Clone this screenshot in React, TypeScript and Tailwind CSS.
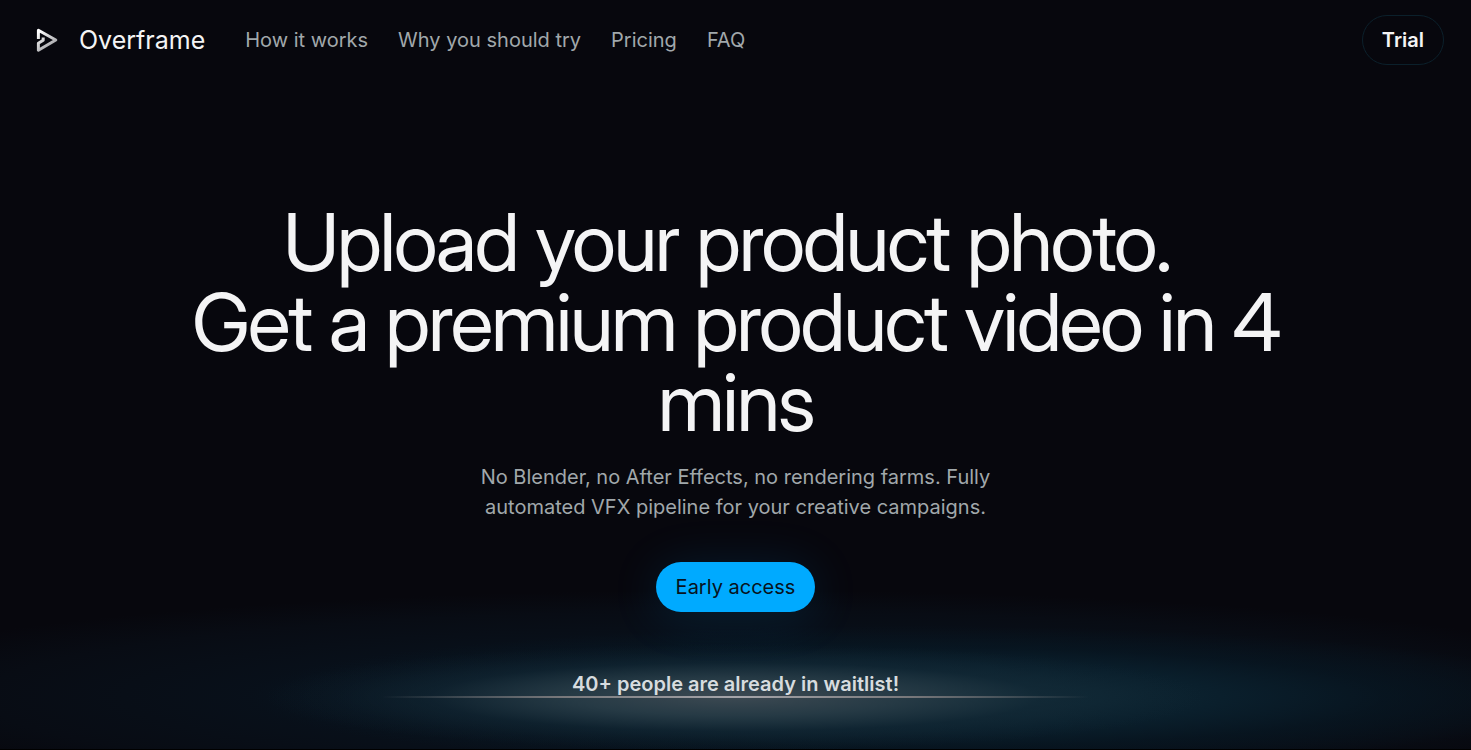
const links = [
  { label: "How it works", href: "#how" },
  { label: "Why you should try", href: "#why" },
  { label: "Pricing", href: "#pricing" },
  { label: "FAQ", href: "#faq" },
];

function Logo() {
  return (
    <svg viewBox="0 0 24 26" className="h-[26px] w-6" fill="none" aria-hidden="true">
      <defs>
        <linearGradient id="mark" x1="2" y1="6" x2="16" y2="24" gradientUnits="userSpaceOnUse">
          <stop stopColor="#ffffff" />
          <stop offset="1" stopColor="#9b9b9f" />
        </linearGradient>
      </defs>
      <path
        d="M3.4 12V3.2L20.8 13L3.4 23.2V16.2L8.2 13.2V10.6"
        stroke="url(#mark)"
        strokeWidth="3"
        strokeLinejoin="round"
      />
    </svg>
  );
}

export default function App() {
  return (
    <div className="relative isolate flex min-h-screen flex-col overflow-hidden bg-[#07070d] font-['Inter',sans-serif] text-xl text-[#f4f4f5]">
      <div className="pointer-events-none absolute inset-x-0 bottom-0 -z-10 h-[160px] overflow-hidden border-b border-black" aria-hidden="true">
        <div className="absolute -inset-x-[14%] top-0 h-[214px] bg-[radial-gradient(closest-side,#071421,#08101a_50%,#080c14_80%,#07070d00)]" />
        <div className="absolute -right-[8%] top-[36px] left-[17%] h-[142px] bg-[radial-gradient(closest-side,#12303d,#0a1f2c_45%,#07192599_70%,#07192500)]" />
        <div className="absolute top-[54px] right-[18%] left-[18%] h-[106px] bg-[radial-gradient(closest-side,#3c4952,#263a45_35%,#13283599_65%,#13283533_85%,#13283500)]" />
        <div className="absolute top-[106px] right-[26%] left-[26%] h-[2px] bg-[linear-gradient(90deg,transparent,#77777a_25%,#a5a5aa_50%,#77777a_75%,transparent)]" />
      </div>

      <header className="flex h-20 items-center justify-between pr-[27px] pl-[35px]">
        <div className="flex items-center gap-10">
          <a href="#top" className="flex items-center gap-5 text-[25px] leading-8">
            <Logo />
            Overframe
          </a>
          <nav className="flex items-center gap-[30px] text-[#a1a8ab]">
            {links.map((link) => (
              <a key={link.href} href={link.href}>{link.label}</a>
            ))}
          </nav>
        </div>
        <button className="h-[50px] rounded-full border border-[#0b202b] px-[19px] font-semibold">Trial</button>
      </header>

      <main className="flex flex-col items-center px-4 pt-[122px] text-center">
        <h1 className="max-w-[1100px] font-['Inter_Display',Inter,sans-serif] text-[80px] leading-[80px] tracking-[-0.03em]">
          Upload your product photo.&nbsp;
          <br />
          Get a premium product video in 4 mins
        </h1>
        <p className="mt-5 max-w-[540px] leading-[30px] text-[#a1a8ab]">
          No Blender, no After Effects, no rendering farms. Fully automated VFX pipeline for your creative campaigns.
        </p>
        <button className="mt-10 h-[50px] rounded-full bg-[#00aaff] px-5 text-[#07131d] shadow-[0_4px_50px_#00a6ff24]">
          Early access
        </button>
        <p className="mt-[57px] leading-[30px] font-semibold text-[#d7dcdf]">40+ people are already in waitlist!</p>
      </main>
    </div>
  );
}
